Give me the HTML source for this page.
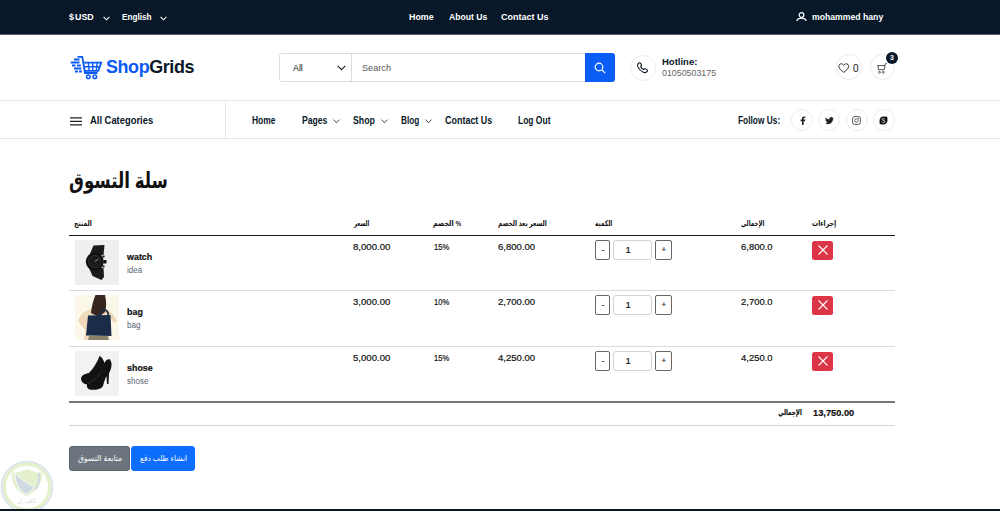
<!DOCTYPE html>
<html lang="en">
<head>
<meta charset="utf-8">
<title>ShopGrids - سلة التسوق</title>
<style>
*{box-sizing:border-box;margin:0;padding:0}
html,body{width:1000px;height:511px;overflow:hidden;background:#fff}
body{position:relative;font-family:"Liberation Sans","DejaVu Sans",sans-serif;font-size:10px;color:#081828;line-height:1}
a{color:inherit;text-decoration:none}
.abs{position:absolute;white-space:nowrap;transform-origin:0 50%}
svg{display:block;overflow:visible}

/* top bar */
.topbar{position:absolute;left:0;top:0;width:1000px;height:35px;background:#081828;border-bottom:1px solid #56616d;color:#fff;font-size:9.9px;font-weight:bold}
.topbar .abs{top:11.2px;line-height:11px}
.chev{position:absolute}

/* middle header */
.mid{position:absolute;left:0;top:35px;width:1000px;height:65px;background:#fff}
.logo-text{position:absolute;top:55.3px;transform-origin:0 50%;white-space:nowrap;font-size:19.2px;font-weight:bold;line-height:23px;letter-spacing:-.45px;color:#081828}
.logo-text b{color:#0a5af5}
.search{position:absolute;left:279px;top:53px;width:336px;height:29px;border:1px solid #dcdcdc;border-radius:3px;background:#fff}
.search .sel{position:absolute;left:0;top:0;width:72px;height:27px;border-right:1px solid #dcdcdc}
.search .btn{position:absolute;right:-1px;top:-1px;width:30px;height:29px;background:#0a5ef5;border-radius:0 3px 3px 0}
.circle{position:absolute;border:1px solid #ececec;border-radius:50%;background:#fff}

/* nav */
.nav{position:absolute;left:0;top:100px;width:1000px;height:39px;border-top:1px solid #e6e6e6;border-bottom:1px solid #e6e6e6;background:#fff;font-weight:bold;font-size:10px}
.nav .abs{top:13.6px;line-height:11px}
.nav .vline{position:absolute;left:225px;top:0;width:1px;height:37px;background:#e6e6e6}

/* main */
h1{position:absolute;top:165.8px;transform-origin:0 50%;font-family:"Liberation Sans","DejaVu Sans",sans-serif;font-size:22px;line-height:30px;font-weight:bold;color:#111;direction:rtl;white-space:nowrap}
table.cart{position:absolute;left:69px;top:210px;width:826px;border-collapse:separate;border-spacing:0;table-layout:fixed;font-size:9.5px;color:#111}
.sx{display:inline-block;transform-origin:0 50%;white-space:nowrap}
table.cart th{height:26px;text-align:left;font-size:8px;line-height:10px;font-weight:bold;padding:2px 0 0 5.4px;vertical-align:middle;border-bottom:1.2px solid #1a1a1a;font-family:"Liberation Sans","DejaVu Sans",sans-serif}
table.cart td{-webkit-text-stroke:.2px #111;vertical-align:top;padding:4.8px 0 0 5.4px;height:55px;line-height:11px;border-bottom:1px solid #dadada;white-space:nowrap}
table.cart tr:nth-child(2) td{height:56px}
table.cart tr.last td{border-bottom:2px solid #777;height:56px}
table.cart tr.total td{height:23px;padding-top:4px;border-bottom:1px solid #d4d4d4}
table.cart td.tl{text-align:right;padding-right:5px;font-size:8px;font-weight:bold;font-family:"Liberation Sans","DejaVu Sans",sans-serif}
table.cart td.tl .sx{transform-origin:100% 50%}
.prod{position:relative;height:45px;margin-top:-.5px}
.prod .img{position:absolute;left:.6px;top:0;width:44px;height:45px;overflow:hidden}
.prod .nm{position:absolute;left:52.4px;top:11.5px;font-weight:bold;font-size:9px;line-height:11px}
.prod .ct{-webkit-text-stroke:0;position:absolute;left:52.4px;top:25.2px;font-size:8.3px;line-height:10px;color:#5b6472}
.qty{position:relative;height:20px;margin-top:-.5px}
.qty span{position:absolute;top:0;height:19.5px;border:1px solid #666;border-radius:2px;text-align:center;line-height:17.5px;font-size:8px;background:#fff;color:#333}
.qty .m{left:.6px;width:15px}
.qty .v{left:18.3px;width:39.2px;padding-right:9.4px;border-color:#ced4da;border-radius:3px;font-size:9.5px;color:#111}
.qty .p{left:60.5px;width:17px}
.del{display:block;width:21px;height:19.5px;margin-top:-.3px;margin-left:.6px;background:#dc3545;border-radius:2.5px;position:relative}
.del svg{position:absolute;left:5.5px;top:4.8px}
.btn2{position:absolute;top:446.3px;height:24.5px;border-radius:3px;color:#fff;font-size:8.5px;font-family:"Liberation Sans","DejaVu Sans",sans-serif}
.btn2 .abs{line-height:12px;direction:rtl}
.b-gray{left:69.3px;width:60.3px;background:#6c757d;border:1px solid #5d656c}
.b-blue{left:131px;width:64px;background:#0d6efd;border:1px solid #0d6efd}
footer{position:absolute;left:0;top:508.5px;width:1000px;height:3px;background:#081828}
.wm{position:absolute;left:-1.2px;top:458.6px;width:56px;height:56px;opacity:.9}
</style>
</head>
<body>

<header>
  <div class="topbar">
    <span class="abs" id="tb1" style="left:69px;word-spacing:-1.5px;transform:scaleX(0.897)">$ USD</span>
    <svg class="chev" style="left:103px;top:15.5px" width="7" height="5" viewBox="0 0 7 5"><path d="M.6.8 3.5 3.8 6.4.8" fill="none" stroke="#fff" stroke-width="1.1"/></svg>
    <span class="abs" id="tb2" style="left:122px;transform:scaleX(0.83)">English</span>
    <svg class="chev" style="left:160px;top:15.5px" width="7" height="5" viewBox="0 0 7 5"><path d="M.6.8 3.5 3.8 6.4.8" fill="none" stroke="#fff" stroke-width="1.1"/></svg>
    <a class="abs" id="tb3" style="left:409px;transform:scaleX(0.897)">Home</a>
    <a class="abs" id="tb4" style="left:448.5px;transform:scaleX(0.87)">About Us</a>
    <a class="abs" id="tb5" style="left:501px;transform:scaleX(0.911)">Contact Us</a>
    <svg class="chev" style="left:796.3px;top:11.6px" width="11" height="10" viewBox="0 0 11 10"><circle cx="5.5" cy="3" r="2.3" fill="none" stroke="#fff" stroke-width="1.2"/><path d="M.7 8.8C1.5 6.7 3.3 6.1 5.5 6.1s4 .6 4.8 2.7" fill="none" stroke="#fff" stroke-width="1.2"/></svg>
    <span class="abs" id="tb6" style="left:812px;transform:scaleX(0.877)">mohammed hany</span>
  </div>

  <div class="mid"></div>
  <svg class="abs" style="left:70px;top:55px" width="33" height="25" viewBox="0 0 33 25">
    <g fill="none" stroke="#0a5af5" stroke-width="1.8" stroke-linecap="butt">
      <path d="M7.5 1.8H12.3L15 18H27.5"/>
      <path d="M13.3 7.6H31.2L28.4 15.8H15"/>
      <path d="M14 11.7H30M18.3 7.6 19.2 15.8M22.7 7.6V15.8M27.2 7.6 26.2 15.8" stroke-width="1.4"/>
      <circle cx="18.3" cy="21.7" r="1.8" stroke-width="1.5"/><circle cx="24.8" cy="21.7" r="1.8" stroke-width="1.5"/>
      <path d="M4 4.6H9.5M.8 7.6H9.5M2 10.5H5.5M7 10.5H10.8M4 13.5H11.3M5 16.5H8M9 16.5H12" stroke-width="2"/>
    </g>
  </svg>
  <a class="logo-text" id="logo" style="left:106px;transform:scaleX(0.936)"><b>Shop</b>Grids</a>

  <div class="search">
    <div class="sel"></div>
    <span class="abs" id="sAll" style="left:13px;top:8.7px;font-size:9px;line-height:11px;color:#111;transform:scaleX(0.982)">All</span>
    <svg class="abs" style="left:56.5px;top:11px" width="9" height="6" viewBox="0 0 9 6"><path d="M.7.8 4.5 4.7 8.3.8" fill="none" stroke="#222" stroke-width="1.1"/></svg>
    <span class="abs" id="sSearch" style="left:81.7px;top:8.7px;font-size:9px;line-height:11px;color:#555;transform:scaleX(1.018)">Search</span>
    <div class="btn"><svg class="abs" style="left:9px;top:8.5px" width="12" height="12" viewBox="0 0 12 12"><circle cx="5" cy="5" r="3.8" fill="none" stroke="#fff" stroke-width="1.2"/><path d="M7.8 7.8 11.2 11.2" stroke="#fff" stroke-width="1.2"/></svg></div>
  </div>

  <div class="circle" style="left:629.5px;top:54.5px;width:26px;height:26px"></div>
  <svg class="abs" style="left:636.4px;top:61.6px" width="12.2" height="12.2" viewBox="0 0 11 11"><path d="M2.6.9c.4-.4 1-.3 1.3.1l.9 1.3c.3.4.2.9-.1 1.2l-.5.5c.5 1.1 1.7 2.3 2.8 2.8l.5-.5c.3-.3.8-.4 1.2-.1l1.3.9c.4.3.5.9.1 1.3l-.6.6c-.7.7-1.8.8-2.9.3C4.4 8.2 2.8 6.6 1.7 4.4 1.2 3.3 1.3 2.2 2 1.5z" fill="none" stroke="#081828" stroke-width="1"/></svg>
  <span class="abs" id="hot1" style="left:661.5px;top:56px;font-size:9.4px;font-weight:bold;line-height:12px;transform:scaleX(1.013)">Hotline:</span>
  <span class="abs" id="hot2" style="left:661.5px;top:68px;font-size:9px;line-height:11px;color:#666;transform:scaleX(0.982)">01050503175</span>

  <div class="circle" style="left:836.1px;top:54.3px;width:25.5px;height:25.5px"></div>
  <svg class="abs" style="left:838px;top:62.8px" width="11.5" height="10.2" viewBox="0 0 11 10"><path d="M5.5 9.2C3.5 7.6.7 5.6.7 3.3.7 1.8 1.8.8 3.1.8c1 0 1.9.6 2.4 1.5C6 1.4 6.9.8 7.9.8c1.3 0 2.4 1 2.4 2.5 0 2.3-2.8 4.3-4.8 5.9z" fill="none" stroke="#222" stroke-width=".9"/></svg>
  <span class="abs" id="wish0" style="left:852.9px;top:62px;font-size:10.5px;line-height:12px;color:#111;transform:scaleX(0.95)">0</span>

  <div class="circle" style="left:869.5px;top:54.3px;width:25.5px;height:25.5px"></div>
  <svg class="abs" style="left:876.8px;top:62.8px" width="10" height="11.2" viewBox="0 0 10 10" preserveAspectRatio="none"><path d="M.3 2.3H8L7.3 6H1.5L.9 2.3M8 2.3 8.5.5H9.8" fill="none" stroke="#333" stroke-width=".8"/><circle cx="2.5" cy="8.3" r=".9" fill="none" stroke="#333" stroke-width=".7"/><circle cx="6.3" cy="8.3" r=".9" fill="none" stroke="#333" stroke-width=".7"/></svg>
  <span class="abs" style="left:885.8px;top:52px;width:12.4px;height:12.4px;border-radius:50%;background:#081828;color:#fff;font-size:7px;font-weight:bold;line-height:12.4px;text-align:center">3</span>

  <nav class="nav">
    <svg class="abs" style="left:69.5px;top:15.5px" width="12" height="9" viewBox="0 0 12 9"><path d="M0 .9H12M0 4.4H12M0 7.9H12" stroke="#222" stroke-width="1.2"/></svg>
    <span class="abs" id="n0" style="left:90px;transform:scaleX(0.939);margin-top:.5px">All Categories</span>
    <div class="vline"></div>
    <a class="abs" id="n1" style="left:251.5px;transform:scaleX(0.842)">Home</a>
    <a class="abs" id="n2" style="left:301.5px;transform:scaleX(0.859)">Pages</a>
    <svg class="chev" style="left:333px;top:18.3px" width="7" height="5" viewBox="0 0 7 5"><path d="M.5.6 3.5 3.8 6.5.6" fill="none" stroke="#333" stroke-width=".9"/></svg>
    <a class="abs" id="n3" style="left:353px;transform:scaleX(0.872)">Shop</a>
    <svg class="chev" style="left:381px;top:18.3px" width="7" height="5" viewBox="0 0 7 5"><path d="M.5.6 3.5 3.8 6.5.6" fill="none" stroke="#333" stroke-width=".9"/></svg>
    <a class="abs" id="n4" style="left:400.5px;transform:scaleX(0.821)">Blog</a>
    <svg class="chev" style="left:425px;top:18.3px" width="7" height="5" viewBox="0 0 7 5"><path d="M.5.6 3.5 3.8 6.5.6" fill="none" stroke="#333" stroke-width=".9"/></svg>
    <a class="abs" id="n5" style="left:445.1px;transform:scaleX(0.896)">Contact Us</a>
    <a class="abs" id="n6" style="left:518px;transform:scaleX(0.847)">Log Out</a>
    <span class="abs" id="n7" style="left:737.9px;transform:scaleX(0.834)">Follow Us:</span>
    <div class="circle" style="left:791px;top:8px;width:22px;height:22px"></div>
    <div class="circle" style="left:818px;top:8px;width:22px;height:22px"></div>
    <div class="circle" style="left:845.5px;top:8px;width:22px;height:22px"></div>
    <div class="circle" style="left:872.5px;top:8px;width:22px;height:22px"></div>
    <svg class="abs" style="left:798.5px;top:15px" width="7" height="9" viewBox="0 0 7 9"><path d="M4.6 9V5.2H6L6.2 3.6H4.6V2.7c0-.5.1-.8.8-.8h.9V.5C6.1.5 5.6.4 5 .4 3.8.4 3 1.1 3 2.5v1.1H1.6v1.6H3V9z" fill="#222"/></svg>
    <svg class="abs" style="left:824.5px;top:15.5px" width="9" height="8" viewBox="0 0 9 8"><path d="M9 .9c-.3.1-.7.2-1.1.3.4-.2.7-.6.8-1-.4.2-.8.4-1.2.5C7.2.3 6.7.1 6.2.1c-1 0-1.8.8-1.8 1.8 0 .1 0 .3 0 .4C2.9 2.2 1.5 1.5.6.4.5.7.4 1 .4 1.3c0 .6.3 1.2.8 1.5-.3 0-.6-.1-.8-.2 0 .9.6 1.6 1.5 1.8-.3.1-.5.1-.8 0 .2.7.9 1.3 1.7 1.3C2.1 6.2 1.1 6.5 0 6.4c.8.5 1.8.8 2.8.8 3.4 0 5.2-2.8 5.2-5.2V1.8C8.4 1.6 8.7 1.3 9 .9z" fill="#222"/></svg>
    <svg class="abs" style="left:852px;top:15px" width="9" height="9" viewBox="0 0 9 9"><rect x=".6" y=".6" width="7.8" height="7.8" rx="1.8" fill="none" stroke="#444" stroke-width=".9"/><circle cx="4.5" cy="4.5" r="1.8" fill="none" stroke="#444" stroke-width=".8"/><circle cx="6.7" cy="2.3" r=".5" fill="#444"/></svg>
    <svg class="abs" style="left:879px;top:15px" width="9" height="9" viewBox="0 0 9 9"><path d="M4.5.5C2.3.5.5 2.3.5 4.5c0 .4.1.8.2 1.2C.2 6.5.4 7.5 1.1 8c.6.5 1.5.6 2.2.2.4.2.8.2 1.2.2 2.2 0 4-1.8 4-4 0-.4-.1-.8-.2-1.2C8.8 2.4 8.6 1.5 7.9.9 7.3.4 6.4.3 5.7.7 5.3.6 4.9.5 4.5.5z" fill="#111"/><path d="M5.8 3.3C5.5 2.8 5 2.6 4.4 2.6 3.7 2.6 3.2 3 3.2 3.5c0 1.3 2.7.6 2.7 2 0 .6-.6 1-1.4 1-.7 0-1.3-.3-1.5-.9" fill="none" stroke="#fff" stroke-width=".8"/></svg>
  </nav>
</header>

<main>
  <h1 id="title" style="left:69.2px;transform:scaleX(0.757)">سلة التسوق</h1>

  <table class="cart">
    <colgroup><col style="width:278px"><col style="width:80.5px"><col style="width:65px"><col style="width:97px"><col style="width:146.5px"><col style="width:70.5px"><col style="width:88.5px"></colgroup>
    <thead>
      <tr><th><span class="sx" id="h1" style="transform:scaleX(0.765)">المنتج</span></th><th><span class="sx" id="h2" style="transform:scaleX(0.651);margin-left:1.5px">السعر</span></th><th><span class="sx" id="h3" style="transform:scaleX(0.806)">الخصم %</span></th><th><span class="sx" id="h4" style="transform:scaleX(0.742)">السعر بعد الخصم</span></th><th><span class="sx" id="h5" style="transform:scaleX(0.725)">الكمية</span></th><th><span class="sx" id="h6" style="transform:scaleX(0.691)">الإجمالي</span></th><th><span class="sx" id="h7" style="transform:scaleX(0.774)">إجراءات</span></th></tr>
    </thead>
    <tbody>
      <tr>
        <td><div class="prod"><div class="img">
          <svg width="44" height="45" viewBox="0 0 44 45"><rect width="44" height="45" fill="#efefef"/><path d="M18.5 5.5 29.5 5 28.5 15H14.5z" fill="#1b1b1b"/><path d="M14 28H28.5L29 37 26.5 40 17.5 36z" fill="#1b1b1b"/><circle cx="19.8" cy="21.6" r="9" fill="#0f0f0f"/><circle cx="19.8" cy="21.6" r="6.3" fill="#1a1a1a" stroke="#3a3a3a" stroke-width=".7"/><rect x="28.5" y="20" width="3" height="3.5" rx=".6" fill="#111"/><rect x="27.5" y="15.5" width="2" height="2" fill="#111"/><rect x="27.5" y="25.5" width="2" height="2" fill="#111"/><path d="M19.8 21.6 23.5 19" stroke="#c8c8c8" stroke-width=".7"/></svg>
        </div><span class="nm sx" id="r1nm" style="transform:scaleX(0.99)">watch</span><span class="ct sx" id="r1ct" style="transform:scaleX(0.97)">idea</span></div></td>
        <td><span class="sx" id="r1c2" style="transform:scaleX(1.01);margin-left:0.8px">8,000.00</span></td><td><span class="sx" id="r1c3" style="transform:scaleX(0.8);margin-left:0.8px">15%</span></td><td><span class="sx" id="r1c4" style="transform:scaleX(1.005)">6,800.00</span></td>
        <td><div class="qty"><span class="m">-</span><span class="v">1</span><span class="p">+</span></div></td>
        <td><span class="sx" id="r1c6" style="transform:scaleX(0.994)">6,800.0</span></td>
        <td><a class="del"><svg width="10" height="10" viewBox="0 0 10 10"><path d="M.5.5 9.5 9.5M9.5.5.5 9.5" stroke="#fff" stroke-width="1.1"/></svg></a></td>
      </tr>
      <tr>
        <td><div class="prod"><div class="img">
          <svg width="44" height="45" viewBox="0 0 44 45"><rect width="44" height="45" fill="#fbf8ea"/><path d="M6 20C10 16 15 13.5 20 13L33 14.5C36 17 39.5 21 42 25.5L39.5 28 33 21 31 31 15 35 13.5 45H9L10.5 35C6.5 31 3.5 27.5 3 25z" fill="#f0d9bb"/><path d="M20.5 0H30C31.5 6 31.5 12 30 17L24 22 16 18C16.5 11 18.5 5 20.5 0z" fill="#36261f"/><path d="M13 20.5 35.5 20 36.5 41 11 40.5z" fill="#1b2c48"/><path d="M25 21C25 13.5 33 12 33.5 21" fill="none" stroke="#1b2c48" stroke-width="1.7"/><path d="M14 41H33L34 45H13z" fill="#8c8268"/></svg>
        </div><span class="nm sx" id="r2nm" style="transform:scaleX(0.99)">bag</span><span class="ct sx" id="r2ct" style="transform:scaleX(0.97)">bag</span></div></td>
        <td><span class="sx" id="r2c2" style="transform:scaleX(1.01);margin-left:0.8px">3,000.00</span></td><td><span class="sx" id="r2c3" style="transform:scaleX(0.8);margin-left:0.8px">10%</span></td><td><span class="sx" id="r2c4" style="transform:scaleX(1.005)">2,700.00</span></td>
        <td><div class="qty"><span class="m">-</span><span class="v">1</span><span class="p">+</span></div></td>
        <td><span class="sx" id="r2c6" style="transform:scaleX(0.994)">2,700.0</span></td>
        <td><a class="del"><svg width="10" height="10" viewBox="0 0 10 10"><path d="M.5.5 9.5 9.5M9.5.5.5 9.5" stroke="#fff" stroke-width="1.1"/></svg></a></td>
      </tr>
      <tr class="last">
        <td><div class="prod"><div class="img">
          <svg width="44" height="45" viewBox="0 0 44 45"><rect width="44" height="45" fill="#f2f2f2"/><path d="M24.5 5C27 6 28.5 9 29.5 12 30.5 9.5 33 7.5 35 8.5 37 11 37 15 35.5 19L34 22.5 33.5 33H32L31.5 25C30 28 29 31 28 35 26 38.5 19 39.5 14.5 38.5 12.5 38 11.5 36 12 33.5 8.5 33 6 30.5 6 27.5 6.5 24.5 10 22.5 14 22 18.5 17.5 22.5 11 24.5 5z" fill="#121212"/><path d="M12.5 33C17 30.5 22 27 26 21" fill="none" stroke="#3c3c3c" stroke-width=".8"/><path d="M24 8C21 14 17.5 19 14 22.5" fill="none" stroke="#333" stroke-width=".7"/></svg>
        </div><span class="nm sx" id="r3nm" style="transform:scaleX(0.99)">shose</span><span class="ct sx" id="r3ct" style="transform:scaleX(0.97)">shose</span></div></td>
        <td><span class="sx" id="r3c2" style="transform:scaleX(1.01);margin-left:0.8px">5,000.00</span></td><td><span class="sx" id="r3c3" style="transform:scaleX(0.8);margin-left:0.8px">15%</span></td><td><span class="sx" id="r3c4" style="transform:scaleX(1.005)">4,250.00</span></td>
        <td><div class="qty"><span class="m">-</span><span class="v">1</span><span class="p">+</span></div></td>
        <td><span class="sx" id="r3c6" style="transform:scaleX(0.994)">4,250.0</span></td>
        <td><a class="del"><svg width="10" height="10" viewBox="0 0 10 10"><path d="M.5.5 9.5 9.5M9.5.5.5 9.5" stroke="#fff" stroke-width="1.1"/></svg></a></td>
      </tr>
      <tr class="total">
        <td colspan="6" class="tl"><span class="sx" id="totl" style="transform:scaleX(0.698);margin-left:1px">الإجمالي</span></td>
        <td><span class="sx" id="totv" style="font-weight:bold;transform:scaleX(0.976);margin-left:1px">13,750.00</span></td>
      </tr>
    </tbody>
  </table>

  <a class="btn2 b-gray"><span class="abs" id="b1" style="left:7.5px;top:5px;transform:scaleX(0.898)">متابعة التسوق</span></a>
  <a class="btn2 b-blue"><span class="abs" id="b2" style="left:7.7px;top:5px;transform:scaleX(0.873)">انشاء طلب دفع</span></a>
</main>

<svg class="wm" viewBox="0 0 56 56">
  <circle cx="28" cy="28" r="25.4" fill="#fff" stroke="#d8e0ea" stroke-width="1.8"/>
  <circle cx="28" cy="28" r="22.8" fill="none" stroke="#e2efc6" stroke-width="3.2"/>
  <path d="M28 10C22.5 13 17 13.5 12.8 13.5 12 24 17 32.5 27.5 37.2 38 32.5 44 24 43 13.5 38.5 13.5 33.5 13 28 10z" fill="#e1eec8"/>
  <path d="M16 14C16 24 20 31 27.5 35.5 31 33 33.5 30.5 35.5 28 27.5 24 20.5 19.5 16 14z" fill="#ccd6df" stroke="#fff" stroke-width=".8"/>
  <path d="M40 14C41 21 39 27 36 30.5" fill="none" stroke="#ccd6df" stroke-width="2.2"/>
  <text x="27.5" y="43.8" font-size="6.5" text-anchor="middle" fill="#d3dbe4" font-family="'Liberation Sans','DejaVu Sans',sans-serif">كفيـــل</text>
</svg>
<footer></footer>

</body>
</html>
